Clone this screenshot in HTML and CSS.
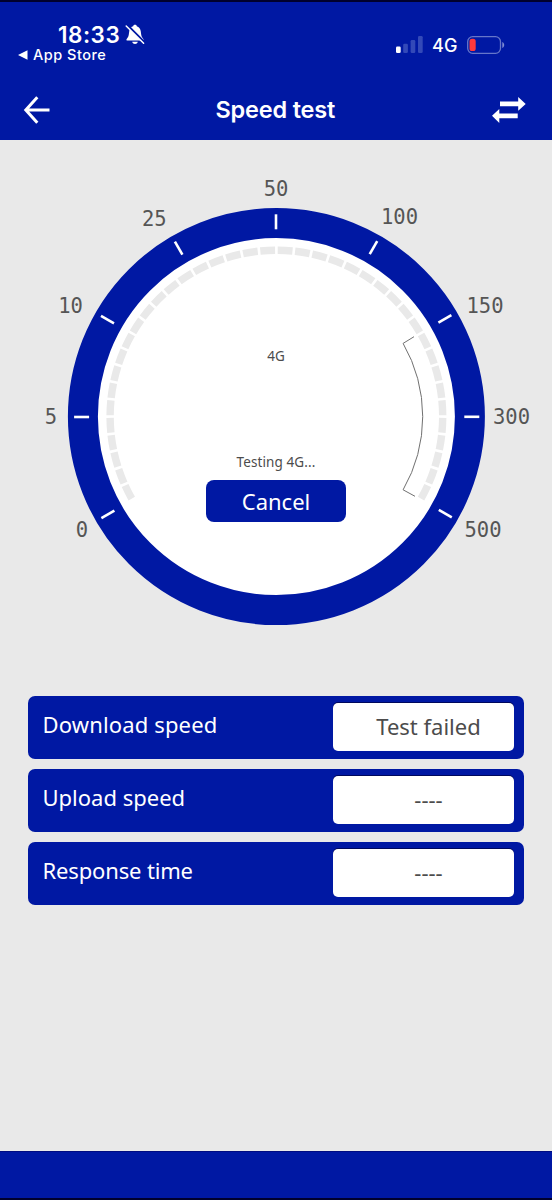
FILE: index.html
```html
<!DOCTYPE html>
<html lang="en">
<head>
<meta charset="utf-8">
<title>Speed test</title>
<link rel="stylesheet" href="styles.css">
</head>
<body>
<div class="screen">
  <header class="header">
    <div class="status">
      <div class="status-left">
        <div class="clock"><span class="time">18:33</span>
          <svg class="bell" width="20" height="21" viewBox="0 0 20 21">
            <path d="M3 16.6C1 16.6 1 15.4 2.2 14.2C4 12.2 3.8 10 4.3 7C4.8 4.3 6.2 2.8 8.2 2.2C8.5 .4 11.5 .4 11.8 2.2C14 2.9 15.2 4.4 15.7 7C16.2 10 16 12.2 17.8 14.2C19 15.4 19 16.6 17 16.6Z" fill="#fff"/>
            <path d="M7.2 17.7H12.8C12.2 20.7 7.8 20.7 7.2 17.7Z" fill="#fff"/>
            <path d="M2.2 1.2L19.2 18.2" stroke="#0018a3" stroke-width="2.4"/>
            <path d="M1.2 2L18.6 19.2" stroke="#fff" stroke-width="1.5" stroke-linecap="round"/>
          </svg>
        </div>
        <div class="back-app">
          <svg width="10" height="10" viewBox="0 0 10 10"><path d="M0 5L9.5 .3V9.7Z" fill="#fff"/></svg>
          <span>App Store</span>
        </div>
      </div>
      <div class="status-right">
        <svg width="28" height="18" viewBox="0 0 28 18">
          <rect x="0" y="10.5" width="4.7" height="6.5" rx="1.3" fill="#fff"/>
          <g fill="#3349b8"><rect x="7.2" y="7.8" width="4.7" height="9.2" rx="1.3"/><rect x="14.6" y="4" width="4.7" height="13" rx="1.3"/><rect x="22" y="0" width="4.7" height="17" rx="1.3"/></g>
        </svg>
        <span class="network">4G</span>
        <svg class="battery" width="38" height="18" viewBox="0 0 38 18">
          <rect x=".7" y=".7" width="32.8" height="16.6" rx="5" fill="none" stroke="#6676c9" stroke-width="1.3"/>
          <rect x="2.5" y="2.8" width="6.2" height="12.2" rx="2.6" fill="#ff393d"/>
          <path d="M35.3 6C37.8 7 37.8 11 35.3 12Z" fill="#7f8cd2"/>
        </svg>
      </div>
    </div>
    <nav class="nav">
      <svg width="28" height="30" viewBox="0 0 28 30"><path d="M14.3 2.3L2.8 15L14.3 27.7M3 15H26.5" fill="none" stroke="#fff" stroke-width="3"/></svg>
      <h1 class="title">Speed test</h1>
      <svg width="34" height="26" viewBox="0 0 34 26"><path d="M8 4.6H26.2V0L33.7 7L26.2 13.8V9.3H8ZM25.7 21.3H7.3V26L0 18.8L7.3 12V16.6H25.7Z" fill="#fff"/></svg>
    </nav>
  </header>

  <main class="main">
    <section class="gauge">
      <svg class="dial" width="552" height="555" viewBox="0 140 552 555">
        <circle cx="276.4" cy="416.6" r="193.5" fill="#fff" stroke="#0018a3" stroke-width="30"/>
        <path d="M132.4 499.7A166.3 166.3 0 1 1 420.4 499.7" pathLength="240" fill="none" stroke="#e9e9e9" stroke-width="7.4" stroke-dasharray="5.1 .9" stroke-dashoffset="-.45"/>
        <path d="M415 496.3L403.1 489.8A146.3 146.3 0 0 0 403.1 343.4L414 336.7" fill="none" stroke="#707070" stroke-width="1"/>
        <g class="ticks">
          <path id="tick" d="M276 214.3V229.3"/>
          <use href="#tick" transform="rotate(-120 276.4 416.6)"/>
          <use href="#tick" transform="rotate(-90 276.4 416.6)"/>
          <use href="#tick" transform="rotate(-60 276.4 416.6)"/>
          <use href="#tick" transform="rotate(-30 276.4 416.6)"/>
          <use href="#tick" transform="rotate(30 276.4 416.6)"/>
          <use href="#tick" transform="rotate(60 276.4 416.6)"/>
          <use href="#tick" transform="rotate(90 276.4 417.2)"/>
          <use href="#tick" transform="rotate(120 276.4 416.6)"/>
        </g>
        <g class="scale">
          <text x="82" y="536.5">0</text>
          <text x="51" y="424">5</text>
          <text x="70.5" y="313">10</text>
          <text x="154.3" y="225.5">25</text>
          <text x="276" y="196">50</text>
          <text x="399.5" y="224">100</text>
          <text x="485" y="313">150</text>
          <text x="511.5" y="424.3">300</text>
          <text x="483" y="537">500</text>
        </g>
      </svg>
      <div class="readout">
        <div class="kind">4G</div>
        <div class="progress">Testing 4G...</div>
        <button class="cancel">Cancel</button>
      </div>
    </section>
    <section class="results">
      <div class="row"><span class="label download">Download speed</span><span class="value">Test failed</span></div>
      <div class="row"><span class="label">Upload speed</span><span class="value">----</span></div>
      <div class="row"><span class="label response">Response time</span><span class="value">----</span></div>
    </section>
  </main>
  <footer class="footer"></footer>
</div>
</body>
</html>
```

FILE: styles.css
```css
* { box-sizing: border-box; }
body { margin: 0; background: #e9e9e9; font-family: "Noto Sans", sans-serif; }
svg { display: block; flex: none; }
.screen { width: 552px; height: 1200px; display: flex; flex-direction: column; overflow: hidden; }
.header { height: 140px; flex: none; background: #0018a3; border-top: 2px solid #00002c; color: #fff; font-family: Inter, sans-serif; }
.status { height: 74px; display: flex; justify-content: space-between; padding: 20px 47px 0 18px; }
.clock { display: flex; align-items: center; height: 25px; padding-left: 40px; gap: 5px; }
.time { font-size: 22.5px; font-weight: 600; line-height: 25px; letter-spacing: .5px; }
.back-app { display: flex; align-items: center; gap: 5px; height: 16px; font-size: 14.5px; font-weight: 500; letter-spacing: .5px; line-height: 16px; }
.status-right { display: flex; align-items: center; height: 18px; margin-top: 14px; }
.network { width: 26px; margin: 2px 9px 0 8px; font-size: 18px; font-weight: 500; letter-spacing: .3px; line-height: 18px; white-space: nowrap; }
.nav { height: 66px; display: flex; align-items: center; justify-content: space-between; padding: 2px 26px 0 23px; }
.title { width: 120px; margin: 0 -8px 0 0; transform: translateX(0); font-size: 23.5px; font-weight: 600; letter-spacing: -.2px; line-height: 30px; white-space: nowrap; }
.main { flex: 1; min-height: 0; }
.gauge { position: relative; height: 556px; }
.ticks { stroke: #fff; stroke-width: 2.6; }
.scale { font-family: "DejaVu Sans Mono", monospace; font-size: 20.5px; fill: #555; text-anchor: middle; }
.readout { position: absolute; inset: 206px 0 auto; display: flex; flex-direction: column; align-items: center; color: #4c4c4c; }
.kind { height: 20px; font-size: 13.5px; line-height: 20px; }
.progress { height: 20px; margin-top: 86px; font-size: 13.5px; line-height: 20px; letter-spacing: .1px; }
.cancel { width: 140px; height: 42px; margin-top: 8px; padding: 0; border: 0; border-radius: 8px; background: #0018a3; color: #fff; font: 22px/42px "Noto Sans", sans-serif; }
.results { display: grid; gap: 10px; padding: 0 28px; }
.row { height: 63px; display: flex; justify-content: space-between; padding: 7px 10px 7px 14.5px; background: #0018a3; border-radius: 7px; }
.label { color: #fff; font-size: 22px; line-height: 42px; }
.download { letter-spacing: .15px; }
.response { letter-spacing: -.15px; }
.value { width: 181px; height: 48px; padding-left: 10px; border-radius: 5px; background: #fff; box-shadow: 0 -1px 0 #00085c; color: #4c4c4c; font-size: 22px; line-height: 47px; text-align: center; }
.footer { height: 49px; flex: none; background: #0018a3; border-top: 1px solid #000c80; border-bottom: 2px solid #00002c; }
```
